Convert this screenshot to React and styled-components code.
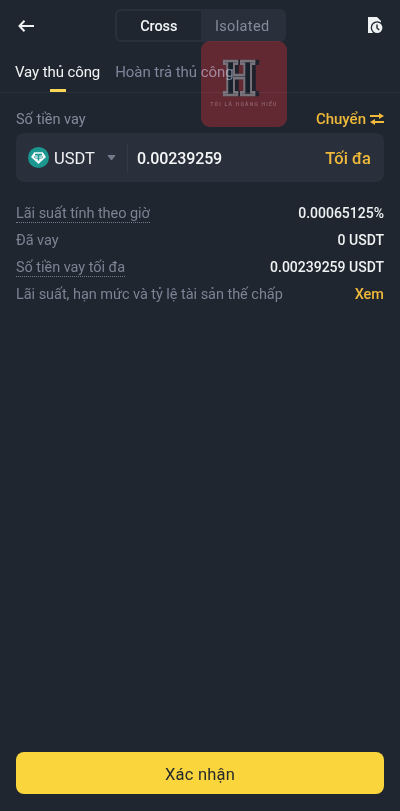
import React, { useState } from 'react';
import styled, { createGlobalStyle } from 'styled-components';

const GlobalStyle = createGlobalStyle`
  *, *::before, *::after {
    box-sizing: border-box;
  }
  body {
    margin: 0;
    background: #1f262f;
    font-family: Roboto, "Noto Sans", sans-serif;
    -webkit-font-smoothing: antialiased;
  }
  button {
    padding: 0;
    border: 0;
    background: none;
    font: inherit;
    letter-spacing: inherit;
    white-space: nowrap;
    cursor: pointer;
  }
  svg {
    display: block;
    flex-shrink: 0;
  }
`;

const Screen = styled.main`
  position: relative;
  display: flex;
  flex-direction: column;
  height: 811px;
  background: #1f262f;
  color: #eaecef;
`;

const Header = styled.header`
  display: flex;
  align-items: center;
  height: 51px;
  padding: 0 17px 0 18px;
`;

const HistoryButton = styled.button`
  margin-left: auto;
`;

const ModeSwitch = styled.div`
  display: flex;
  width: 171px;
  height: 33px;
  margin-left: 81px;
  border: 2px solid #29303c;
  border-radius: 6px;
  background: #29303c;
  overflow: hidden;
`;

const ModeButton = styled.button`
  flex: 1;
  padding-top: 1px;
  border-radius: 4px 0 0 4px;
  background: ${({ $active }) => ($active ? '#1f262f' : 'transparent')};
  color: ${({ $active }) => ($active ? '#f4f5f6' : '#848b9d')};
  font-size: 14.5px;
  font-weight: ${({ $active }) => ($active ? 500 : 400)};
  letter-spacing: ${({ $active }) => ($active ? '-0.1px' : '0.35px')};
`;

// Screened over the stamp so the labels stay readable through it
const Tabs = styled.nav`
  position: relative;
  z-index: 1;
  display: flex;
  gap: 15px;
  height: 42px;
  padding: 0 15px;
  border-bottom: 1px solid #0c0d10;
  mix-blend-mode: screen;
`;

const Tab = styled.button`
  display: flex;
  flex-direction: column;
  align-items: center;
  justify-content: space-between;
  height: 41px;
  padding-top: 12px;
  color: ${({ $active }) => ($active ? '#f0f1f2' : '#6b7184')};
  font-size: 15px;
  line-height: 18px;
  letter-spacing: ${({ $active }) => ($active ? '-0.1px' : '-0.05px')};

  &::after {
    content: '';
    width: 16px;
    height: 3px;
    background: ${({ $active }) => ($active ? '#f8d030' : 'transparent')};
  }
`;

const Form = styled.section`
  display: flex;
  flex-direction: column;
  padding: 17px 16px 0;
`;

const FieldHead = styled.div`
  display: flex;
  align-items: center;
  justify-content: space-between;
  height: 18px;
  margin-bottom: 5px;
  color: #848b9d;
  font-size: 14.5px;
`;

const Transfer = styled.button`
  display: flex;
  align-items: center;
  gap: 4px;
  color: #f0b93a;
  font-size: 15px;
  font-weight: 500;
`;

const AmountField = styled.div`
  display: flex;
  align-items: center;
  height: 49px;
  padding: 0 13px 0 12px;
  border-radius: 8px;
  background: #29303c;
`;

const CoinSelect = styled.button`
  display: flex;
  align-items: center;
  height: 28px;
  padding-right: 11px;
  border-right: 1px solid #333b47;
  color: #f0f1f2;
  font-size: 16.5px;

  span {
    width: 42px;
    margin: 0 11px 0 5px;
    padding-top: 1px;
    text-align: left;
  }
`;

const Amount = styled.span`
  flex: 1;
  margin: 1px 0 0 9px;
  color: #f5f6f7;
  font-size: 16px;
  font-weight: 500;
  letter-spacing: -0.12px;
`;

const MaxButton = styled.button`
  padding-top: 1px;
  color: #f0b93a;
  font-size: 16.5px;
  font-weight: 500;
`;

const Details = styled.dl`
  display: flex;
  flex-direction: column;
  margin: 18px 0 0;
`;

const Row = styled.div`
  display: flex;
  align-items: center;
  justify-content: space-between;
  height: 27px;
`;

const Label = styled.dt`
  height: 18px;
  border-bottom: 1px ${({ $hint }) => ($hint ? 'dotted #737b8b' : 'solid transparent')};
  color: #7b8394;
  font-size: 14.5px;
  line-height: 17px;
  letter-spacing: -0.04px;
  white-space: nowrap;
`;

const Value = styled.dd`
  margin: 0;
  color: ${({ $link }) => ($link ? '#f0b93a' : '#f0f1f2')};
  font-size: ${({ $link }) => ($link ? '14.5px' : '14px')};
  font-weight: 500;
  line-height: 17px;
  white-space: nowrap;
`;

const ConfirmButton = styled.button`
  height: 42px;
  margin: auto 16px 17px;
  padding-top: 2px;
  border-radius: 8px;
  background: #fad53c;
  color: #252a2b;
  font-size: 16.5px;
  letter-spacing: 0.2px;
`;

const Watermark = styled.aside`
  position: absolute;
  top: 41px;
  left: 201px;
  display: flex;
  flex-direction: column;
  align-items: center;
  width: 86px;
  height: 86px;
  padding-top: 18px;
  border-radius: 9px;
  background: rgba(200, 48, 58, 0.4);
  pointer-events: none;
`;

const Monogram = styled.span`
  height: 38px;
  margin: 1px 9px 0 0;
  color: #18202b;
  font: bold 47px/38px 'DejaVu Serif', serif;
  -webkit-text-stroke: 2.6px #77717a;
  filter: drop-shadow(5px 0 0 #1f202b);
  transform: scaleX(0.76);
`;

const WatermarkCaption = styled.span`
  margin-top: 4px;
  color: #8e5f68;
  font-size: 5px;
  font-weight: 700;
  line-height: 5px;
  letter-spacing: 1.25px;
  white-space: nowrap;
`;

const BackIcon = () => (
  <svg width="16" height="12" viewBox="0 0 16 12" fill="none" stroke="#f0f1f2" strokeWidth="2">
    <path d="M6.5 0.8 1.5 6l5 5.2M1.5 6H16" />
  </svg>
);

const HistoryIcon = () => (
  <svg width="15" height="17" viewBox="0 0 15 17">
    <path d="M0 0h9l4 4v6H9v6H0z" fill="#f0f1f2" />
    <circle cx="9.2" cy="10.7" r="6.5" fill="#1f262f" />
    <circle cx="9.2" cy="10.7" r="5.2" fill="#f0f1f2" />
    <path d="M9 7.5v3.4l2.2 2.1" fill="none" stroke="#1f262f" strokeWidth="1.4" />
  </svg>
);

const TransferIcon = () => (
  <svg width="14" height="12" viewBox="0 0 14 12">
    <path d="M0 2h9V0l5 3-5 3V4H0zM14 10H5v2L0 9l5-3v2h9z" fill="#f0b93a" />
  </svg>
);

const TetherIcon = () => (
  <svg width="21" height="21" viewBox="0 0 21 21">
    <circle cx="10.5" cy="10.5" r="10.5" fill="#1b9790" />
    <path d="M6.2 5.2h8.6l3.2 4.7-7.5 7L3 9.9z" fill="#f5fafa" />
    <path d="M7 7.4h7M10.5 7.5v6" fill="none" stroke="#1b9790" strokeWidth="1.5" />
    <ellipse cx="10.5" cy="10.1" rx="4.3" ry="1.2" fill="none" stroke="#1b9790" strokeWidth="0.8" />
  </svg>
);

const CaretIcon = () => (
  <svg width="9" height="6" viewBox="0 0 9 6">
    <path d="M1 0.5h7L4.5 5z" fill="#737b8b" stroke="#737b8b" strokeLinejoin="round" />
  </svg>
);

const modes = ['Cross', 'Isolated'];
const tabs = ['Vay thủ công', 'Hoàn trả thủ công'];
const details = [
  { label: 'Lãi suất tính theo giờ', value: '0.00065125%', hint: true },
  { label: 'Đã vay', value: '0 USDT' },
  { label: 'Số tiền vay tối đa', value: '0.00239259 USDT', hint: true },
  { label: 'Lãi suất, hạn mức và tỷ lệ tài sản thế chấp', value: 'Xem', link: true },
];

const App = () => {
  const [mode, setMode] = useState('Cross');
  const [tab, setTab] = useState(tabs[0]);

  return (
    <Screen>
      <GlobalStyle />
      <Header>
        <button aria-label="Quay lại">
          <BackIcon />
        </button>
        <ModeSwitch>
          {modes.map(item => (
            <ModeButton key={item} $active={item === mode} onClick={() => setMode(item)}>
              {item}
            </ModeButton>
          ))}
        </ModeSwitch>
        <HistoryButton aria-label="Lịch sử">
          <HistoryIcon />
        </HistoryButton>
      </Header>

      <Tabs>
        {tabs.map(item => (
          <Tab key={item} $active={item === tab} onClick={() => setTab(item)}>
            {item}
          </Tab>
        ))}
      </Tabs>

      <Form>
        <FieldHead>
          <span>Số tiền vay</span>
          <Transfer>
            Chuyển
            <TransferIcon />
          </Transfer>
        </FieldHead>
        <AmountField>
          <CoinSelect>
            <TetherIcon />
            <span>USDT</span>
            <CaretIcon />
          </CoinSelect>
          <Amount>0.00239259</Amount>
          <MaxButton>Tối đa</MaxButton>
        </AmountField>
        <Details>
          {details.map(({ label, value, hint, link }) => (
            <Row key={label}>
              <Label $hint={hint}>{label}</Label>
              <Value $link={link}>{value}</Value>
            </Row>
          ))}
        </Details>
      </Form>

      <ConfirmButton>Xác nhận</ConfirmButton>

      <Watermark>
        <Monogram>H</Monogram>
        <WatermarkCaption>TÔI LÀ HOÀNG HIẾU</WatermarkCaption>
      </Watermark>
    </Screen>
  );
};

export default App;
